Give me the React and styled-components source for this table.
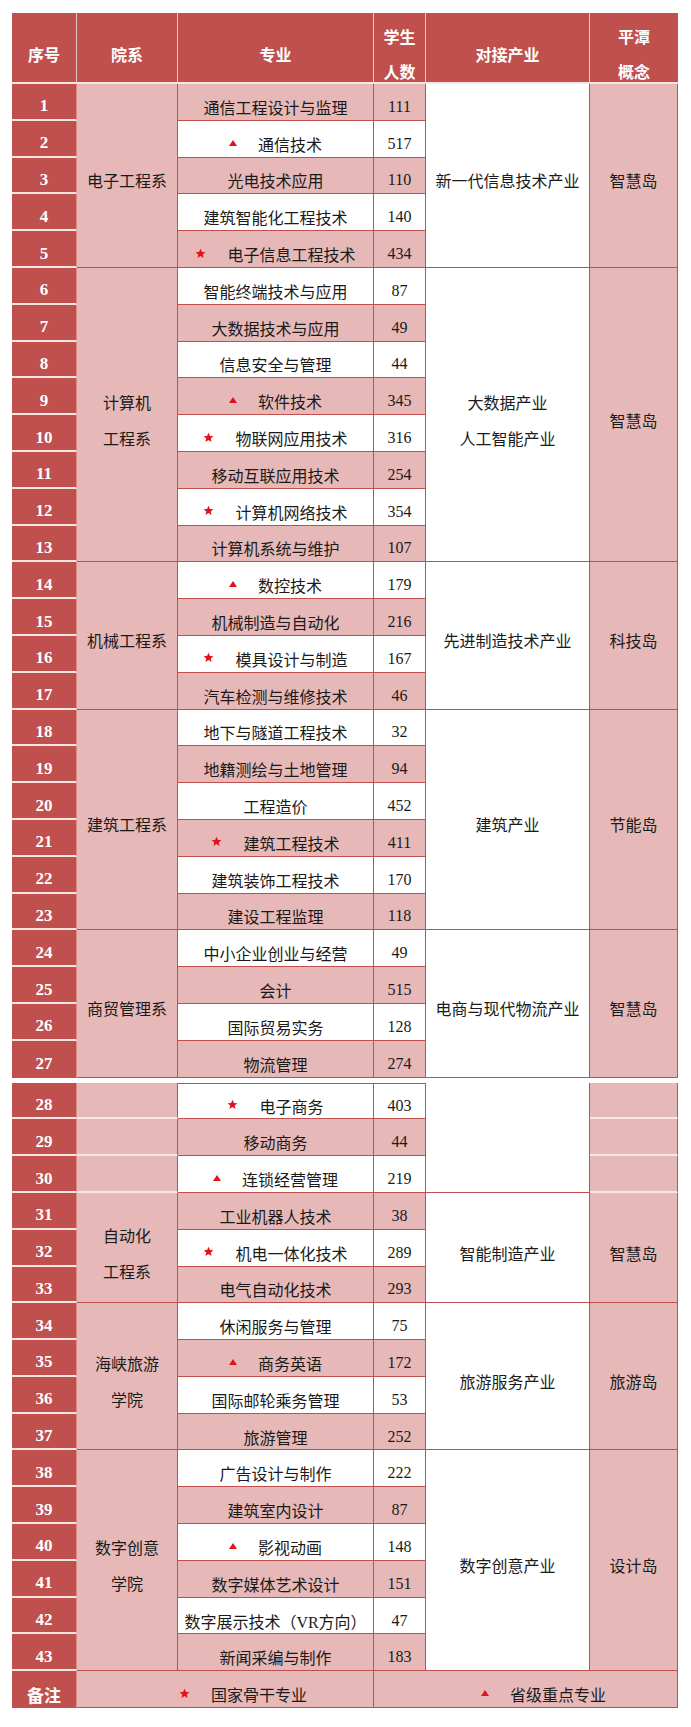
import React from "react"
import styled, {createGlobalStyle, css} from "styled-components"

const RED = "#c0504d"
const PINK = "#e6b8b7"
const LIGHT = "#f7e6e5"

const majors = [
  ["通信工程设计与监理", 111],
  ["通信技术", 517, "tri"],
  ["光电技术应用", 110],
  ["建筑智能化工程技术", 140],
  ["电子信息工程技术", 434, "star"],
  ["智能终端技术与应用", 87],
  ["大数据技术与应用", 49],
  ["信息安全与管理", 44],
  ["软件技术", 345, "tri"],
  ["物联网应用技术", 316, "star"],
  ["移动互联应用技术", 254],
  ["计算机网络技术", 354, "star"],
  ["计算机系统与维护", 107],
  ["数控技术", 179, "tri"],
  ["机械制造与自动化", 216],
  ["模具设计与制造", 167, "star"],
  ["汽车检测与维修技术", 46],
  ["地下与隧道工程技术", 32],
  ["地籍测绘与土地管理", 94],
  ["工程造价", 452],
  ["建筑工程技术", 411, "star"],
  ["建筑装饰工程技术", 170],
  ["建设工程监理", 118],
  ["中小企业创业与经营", 49],
  ["会计", 515],
  ["国际贸易实务", 128],
  ["物流管理", 274],
  ["电子商务", 403, "star"],
  ["移动商务", 44],
  ["连锁经营管理", 219, "tri"],
  ["工业机器人技术", 38],
  ["机电一体化技术", 289, "star"],
  ["电气自动化技术", 293],
  ["休闲服务与管理", 75],
  ["商务英语", 172, "tri"],
  ["国际邮轮乘务管理", 53],
  ["旅游管理", 252],
  ["广告设计与制作", 222],
  ["建筑室内设计", 87],
  ["影视动画", 148, "tri"],
  ["数字媒体艺术设计", 151],
  ["数字展示技术（VR方向）", 47],
  ["新闻采编与制作", 183],
]

const groupsA = [
  {from: 1, to: 5, dept: "电子工程系", industry: "新一代信息技术产业", concept: "智慧岛"},
  {from: 6, to: 13, dept: "计算机\n工程系", industry: "大数据产业\n人工智能产业", concept: "智慧岛"},
  {from: 14, to: 17, dept: "机械工程系", industry: "先进制造技术产业", concept: "科技岛"},
  {from: 18, to: 23, dept: "建筑工程系", industry: "建筑产业", concept: "节能岛"},
  {from: 24, to: 27, dept: "商贸管理系", industry: "电商与现代物流产业", concept: "智慧岛"},
]

const groupsB = [
  {from: 31, to: 33, dept: "自动化\n工程系", industry: "智能制造产业", concept: "智慧岛"},
  {from: 34, to: 37, dept: "海峡旅游\n学院", industry: "旅游服务产业", concept: "旅游岛"},
  {from: 38, to: 43, dept: "数字创意\n学院", industry: "数字创意产业", concept: "设计岛"},
]

const GlobalStyle = createGlobalStyle`
  body {
    margin: 0;
    background: #fff;
    font-family: "Noto Sans CJK SC", sans-serif;
  }
`

const Page = styled.div`
  width: 691px;
  height: 1727px;
  padding: 13px 13px 0 12px;
  box-sizing: border-box;
  display: flex;
  flex-direction: column;
  gap: 5px;
`

const Table = styled.div`
  display: grid;
  grid-template-columns: 65px 101px 196px 52px 164px 88px;
  grid-template-rows: ${p => (p.$head ? "71px " : "")}repeat(${p => p.$rows}, 36.8px);
`

const cell = css`
  display: flex;
  align-items: center;
  justify-content: center;
  text-align: center;
  box-sizing: border-box;
  padding-top: 10px;
  grid-row: ${p => p.$row} / span ${p => p.$span || 1};
  grid-column: ${p => p.$col} / span ${p => p.$cols || 1};
`

const HeadCell = styled.div`
  ${cell};
  padding-top: 13px;
  background: ${RED};
  color: #fff;
  font-weight: 700;
  font-size: 16px;
  line-height: 35px;
  white-space: pre-line;
  border-bottom: 2px solid ${LIGHT};
  border-right: ${p => (p.$last ? "none" : `1px solid #ebc6c5`)};
`

const SeqCell = styled.div`
  ${cell};
  background: ${RED};
  color: #fff;
  font-family: "Liberation Serif", "Noto Sans CJK SC", serif;
  font-weight: 700;
  font-size: 17px;
  border-bottom: ${p => (p.$end ? "none" : `2px solid ${LIGHT}`)};
  border-right: 1px solid #d98b89;
`

const DeptCell = styled.div`
  ${cell};
  background: ${PINK};
  color: #1a1a1a;
  font-size: 16px;
  line-height: 36px;
  white-space: pre-line;
  border-right: 1px solid ${RED};
  border-bottom: ${p => (p.$blank ? `2px solid ${LIGHT}` : `1px solid ${RED}`)};
`

const MajorCell = styled.div`
  ${cell};
  background: ${p => (p.$pink ? PINK : "#fff")};
  color: #1a1a1a;
  font-family: "Liberation Serif", "Noto Sans CJK SC", serif;
  font-size: 16px;
  border-right: 1px solid ${RED};
  border-bottom: 1px solid ${RED};
  border-top: ${p => (p.$top ? `1px solid ${RED}` : "none")};
`

const CountCell = styled(MajorCell)`
  font-size: 16px;
`

const IndustryCell = styled.div`
  ${cell};
  background: #fff;
  color: #1a1a1a;
  font-size: 16px;
  line-height: 36px;
  white-space: pre-line;
  border-right: 1px solid ${RED};
  border-bottom: 1px solid ${RED};
`

const ConceptCell = styled.div`
  ${cell};
  background: ${PINK};
  color: #1a1a1a;
  font-size: 16px;
  border-right: 1px solid ${RED};
  border-bottom: ${p => (p.$blank ? `2px solid ${LIGHT}` : `1px solid ${RED}`)};
`

const NoteCell = styled.div`
  ${cell};
  padding-left: 36px;
  background: ${PINK};
  color: #1a1a1a;
  font-size: 16px;
  border-right: 1px solid ${RED};
  border-bottom: 1px solid ${RED};
`

const Mark = styled.span`
  display: inline-flex;
  align-items: center;
  margin-right: 21px;
  margin-top: -2px;
`

const Triangle = styled.span`
  width: 0;
  height: 0;
  border-left: 4.5px solid transparent;
  border-right: 4.5px solid transparent;
  border-bottom: 6px solid #e0121b;
`

const Star = () => (
  <svg width="11" height="11" viewBox="0 0 24 24">
    <path
      fill="#e0121b"
      d="M12 1.5l3.1 7.1 7.6.6-5.8 5 1.8 7.5L12 17.7l-6.7 4 1.8-7.5-5.8-5 7.6-.6z"
    />
  </svg>
)

const Marker = ({type}) =>
  type ? <Mark>{type === "star" ? <Star/> : <Triangle/>}</Mark> : null

const headers = ["序号", "院系", "专业", "学生\n人数", "对接产业", "平潭\n概念"]

// offset: grid row of a data row = its number minus offset
const rowsFor = (from, to, offset, isLastBlock) =>
  majors.slice(from - 1, to).map(([name, count, mark], i) => {
    const n = from + i
    const row = n - offset
    const pink = n % 2 === 1
    return (
      <React.Fragment key={n}>
        <SeqCell $row={row} $col={1} $end={!isLastBlock && n === to}>{n}</SeqCell>
        <MajorCell $row={row} $col={3} $pink={pink} $top={n === 28}>
          <Marker type={mark}/>{name}
        </MajorCell>
        <CountCell $row={row} $col={4} $pink={pink} $top={n === 28}>{count}</CountCell>
      </React.Fragment>
    )
  })

const groupCells = (groups, offset) =>
  groups.map(g => {
    const span = g.to - g.from + 1
    const row = g.from - offset
    return (
      <React.Fragment key={g.from}>
        <DeptCell $row={row} $span={span} $col={2}>{g.dept}</DeptCell>
        <IndustryCell $row={row} $span={span} $col={5}>{g.industry}</IndustryCell>
        <ConceptCell $row={row} $span={span} $col={6}>{g.concept}</ConceptCell>
      </React.Fragment>
    )
  })

const App = () => {
  return (
    <Page>
      <GlobalStyle/>
      <Table $head $rows={27}>
        {headers.map((h, i) => (
          <HeadCell key={h} $row={1} $col={i + 1} $last={i === 5}>{h}</HeadCell>
        ))}
        {rowsFor(1, 27, -1)}
        {groupCells(groupsA, -1)}
      </Table>
      <Table $rows={17}>
        {rowsFor(28, 43, 27, true)}
        {[28, 29, 30].map(n => (
          <React.Fragment key={n}>
            <DeptCell $row={n - 27} $col={2} $blank/>
            <ConceptCell $row={n - 27} $col={6} $blank/>
          </React.Fragment>
        ))}
        <IndustryCell $row={1} $span={3} $col={5}/>
        {groupCells(groupsB, 27)}
        <SeqCell $row={17} $col={1} $end>备注</SeqCell>
        <NoteCell $row={17} $col={2} $cols={2}><Marker type="star"/>国家骨干专业</NoteCell>
        <NoteCell $row={17} $col={4} $cols={3}><Marker type="tri"/>省级重点专业</NoteCell>
      </Table>
    </Page>
  )
}

export default App
